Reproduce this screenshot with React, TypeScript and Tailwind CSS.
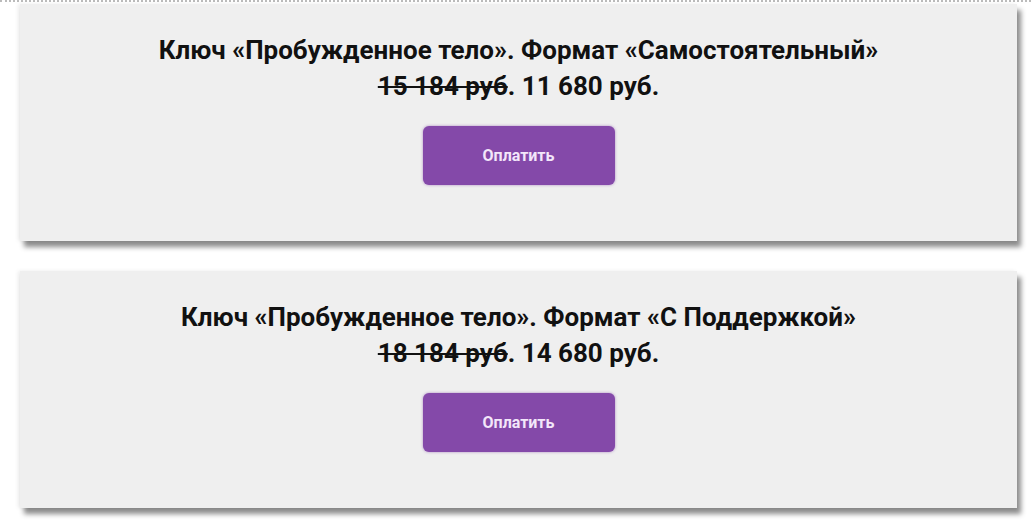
const plans = [
  { name: "Самостоятельный", oldPrice: "15 184 руб", price: "11 680 руб." },
  { name: "С Поддержкой", oldPrice: "18 184 руб", price: "14 680 руб." },
];

function PlanCard({ plan }: { plan: (typeof plans)[number] }) {
  return (
    <div className="h-[237px] bg-[#efefef] shadow-[4px_6px_5px_rgba(0,0,0,0.45),-2px_0_4px_rgba(0,0,0,0.08)] flex flex-col items-center pt-[28px]">
      <p className="text-[26px] leading-[36px] font-bold text-[#111] text-center">
        Ключ «Пробужденное тело». Формат «{plan.name}»
      </p>
      <p className="text-[26px] leading-[36px] font-bold text-[#111] text-center">
        <span className="line-through">{plan.oldPrice}</span>. {plan.price}
      </p>
      <button className="mt-[22px] w-[192px] h-[59px] rounded-[6px] bg-[#8449a9] text-[#f3e6fa] text-[16px] font-bold shadow-[0_0_3px_rgba(132,73,169,0.6)]">
        Оплатить
      </button>
    </div>
  );
}

export default function App() {
  return (
    <div className="w-[1031px] h-[530px] bg-white font-['Roboto',sans-serif] overflow-hidden">
      <div className="border-t-2 border-dotted border-[#bbb]" />
      <div className="px-[20px] pr-[14px] pt-[2px] flex flex-col gap-[30px]">
        {plans.map((plan) => (
          <PlanCard key={plan.name} plan={plan} />
        ))}
      </div>
    </div>
  );
}
